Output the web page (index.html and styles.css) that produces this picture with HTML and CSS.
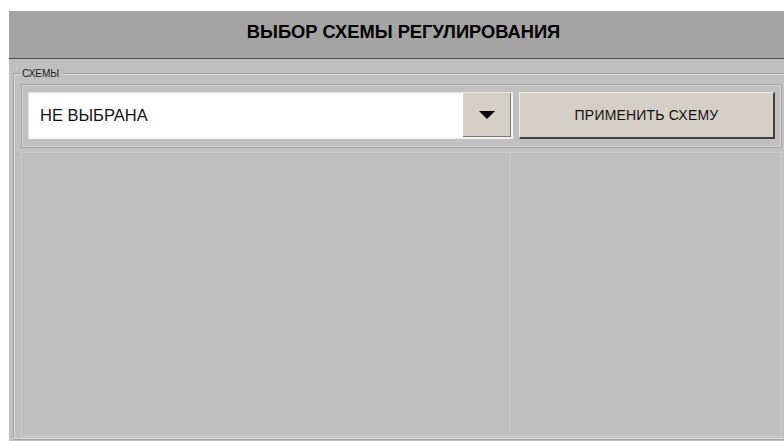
FILE: index.html
```html
<!DOCTYPE html>
<html lang="ru">
<head>
<meta charset="utf-8">
<title>Выбор схемы регулирования</title>
<link rel="stylesheet" href="styles.css">
</head>
<body>
<div class="app">
  <header class="title-bar">
    <h1 class="title">ВЫБОР СХЕМЫ РЕГУЛИРОВАНИЯ</h1>
  </header>
  <fieldset class="schemes">
    <legend class="schemes-legend">СХЕМЫ</legend>
    <div class="schemes-body">
      <div class="picker-row">
        <div class="combo">
          <div class="combo-value">НЕ ВЫБРАНА</div>
          <div class="combo-button">
            <svg width="16" height="8" viewBox="0 0 16 8"><polygon points="0,0 16,0 8,8" fill="#000"/></svg>
          </div>
        </div>
        <button class="apply-button">ПРИМЕНИТЬ СХЕМУ</button>
      </div>
      <div class="panels">
        <div class="panel panel-left"></div>
        <div class="panel panel-right"></div>
      </div>
    </div>
  </fieldset>
</div>
</body>
</html>
```
FILE: styles.css
```css
html, body {
  margin: 0;
  padding: 0;
  background: #ffffff;
  overflow: hidden;
}

.app {
  margin: 11px 0 0 9px;
  height: 430px;
  background: #c0c0c0;
  font-family: "Liberation Sans", Arial, sans-serif;
  overflow: hidden;
  display: flex;
  flex-direction: column;
}

.title-bar {
  height: 47px;
  background: #a3a3a3;
  border-bottom: 1px solid #4a4a4a;
  display: flex;
  align-items: center;
  justify-content: center;
  padding-left: 14px;
  flex: none;
}

.title {
  margin: 0 0 5px 0;
  font-size: 18.3px;
  font-weight: bold;
  color: #000000;
}

/* etched frame around the scheme controls */
.schemes {
  margin: 9px -4px 2px 4px;
  padding: 0 5px 0 7px;
  border: 1px solid #a4a4a4;
  border-right-color: #dedede;
  border-bottom-color: #dedede;
  box-shadow: inset 1px 1px 0 #dadada, 1px 1px 0 #a4a4a4;
  flex: 1;
  min-height: 0;
  display: flex;
}

.schemes-legend {
  font-size: 10px;
  line-height: 11px;
  padding: 0 3px 0 1px;
  margin-left: 0;
  color: #1a1a1a;
  background: #c0c0c0;
}

.schemes-body {
  flex: 1;
  display: flex;
  flex-direction: column;
  gap: 4px;
  padding-top: 5px;
}

.picker-row {
  height: 64px;
  box-sizing: border-box;
  border: 1px solid #a6a6a6;
  box-shadow: inset 1px 1px 0 #d2d2d2, inset -1px -1px 0 #d2d2d2;
  padding: 7px 6px 8px 6px;
  display: flex;
  gap: 6px;
  flex: none;
}

.combo {
  flex: 0 0 485px;
  box-sizing: border-box;
  display: flex;
  background: #ffffff;
  border: 1px solid #e4e4e4;
  border-right: 2px solid #f4f4f4;
  border-bottom: 2px solid #f4f4f4;
}

.combo-value {
  flex: 1;
  display: flex;
  align-items: center;
  padding-left: 11px;
  font-size: 16.5px;
  color: #111111;
}

.combo-button {
  width: 47px;
  background: #d4d0c8;
  border-right: 1px solid #7a7a7a;
  border-bottom: 1px solid #7a7a7a;
  display: flex;
  align-items: center;
  justify-content: center;
}

.apply-button {
  flex: 1;
  margin: 0;
  background: #d4d0c8;
  border: none;
  border-top: 1px solid #ecebe7;
  border-left: 1px solid #ecebe7;
  border-right: 2px solid #404040;
  border-bottom: 2px solid #404040;
  font-family: "Liberation Sans", Arial, sans-serif;
  font-size: 14px;
  letter-spacing: 0.2px;
  color: #111111;
  padding: 0 0 1px 0;
}

.panels {
  flex: 1;
  display: flex;
  margin-bottom: 1px;
}

.panel {
  background: #c0c0c0;
  border: 1px solid #cdcdcd;
  box-shadow: inset 1px 1px 0 #bbbbbb;
}

.panel-left {
  flex: 0 0 490px;
  box-sizing: border-box;
}

.panel-right {
  flex: 1;
  border-left: none;
}
```
